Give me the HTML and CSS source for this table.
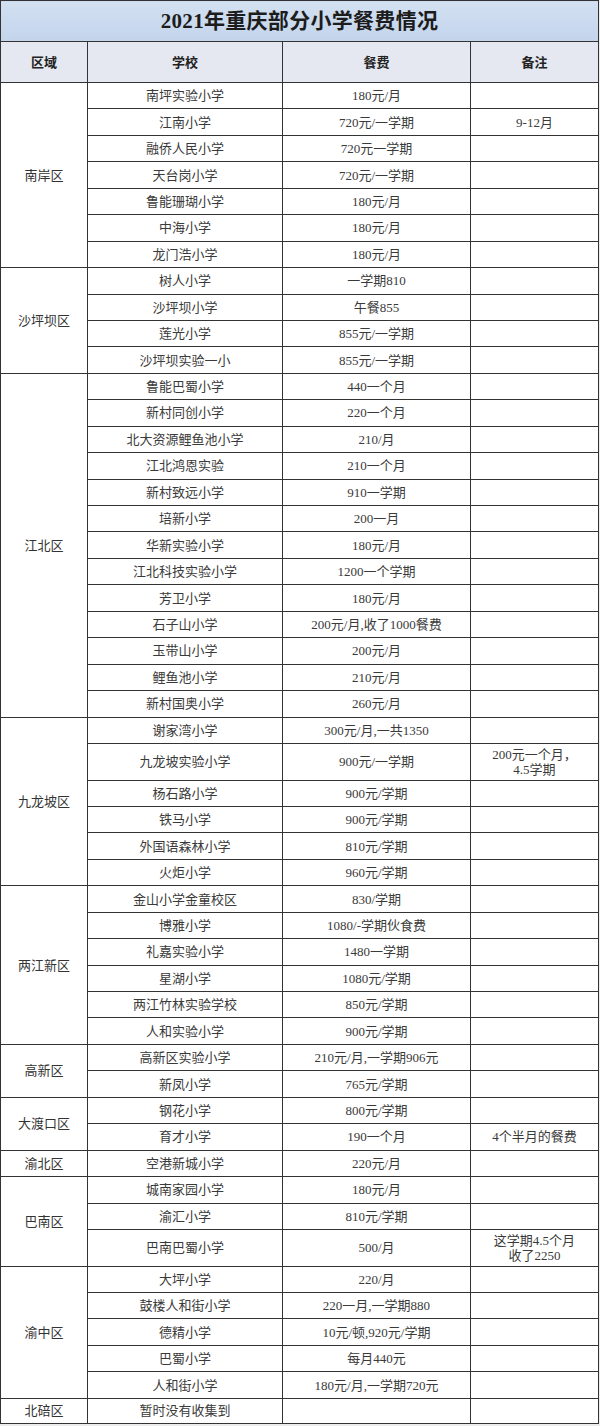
FILE: index.html
```html
<!DOCTYPE html>
<html lang="zh-CN">
<head>
<meta charset="utf-8">
<title>2021年重庆部分小学餐费情况</title>
<link rel="stylesheet" href="styles.css">
</head>
<body>
<table class="fees">
<colgroup>
<col class="c-area"><col class="c-school"><col class="c-fee"><col class="c-note">
</colgroup>
<thead>
<tr class="title-row"><th colspan="4" class="title">2021年重庆部分小学餐费情况</th></tr>
<tr class="head-row"><th>区域</th><th>学校</th><th>餐费</th><th>备注</th></tr>
</thead>
<tbody>
<tr><td rowspan="7" class="area">南岸区</td><td>南坪实验小学</td><td>180元/月</td><td></td></tr>
<tr><td>江南小学</td><td>720元/一学期</td><td>9-12月</td></tr>
<tr><td>融侨人民小学</td><td>720元一学期</td><td></td></tr>
<tr><td>天台岗小学</td><td>720元/一学期</td><td></td></tr>
<tr><td>鲁能珊瑚小学</td><td>180元/月</td><td></td></tr>
<tr><td>中海小学</td><td>180元/月</td><td></td></tr>
<tr><td>龙门浩小学</td><td>180元/月</td><td></td></tr>

<tr><td rowspan="4" class="area">沙坪坝区</td><td>树人小学</td><td>一学期810</td><td></td></tr>
<tr><td>沙坪坝小学</td><td>午餐855</td><td></td></tr>
<tr><td>莲光小学</td><td>855元/一学期</td><td></td></tr>
<tr><td>沙坪坝实验一小</td><td>855元/一学期</td><td></td></tr>

<tr><td rowspan="13" class="area">江北区</td><td>鲁能巴蜀小学</td><td>440一个月</td><td></td></tr>
<tr><td>新村同创小学</td><td>220一个月</td><td></td></tr>
<tr><td>北大资源鲤鱼池小学</td><td>210/月</td><td></td></tr>
<tr><td>江北鸿恩实验</td><td>210一个月</td><td></td></tr>
<tr><td>新村致远小学</td><td>910一学期</td><td></td></tr>
<tr><td>培新小学</td><td>200一月</td><td></td></tr>
<tr><td>华新实验小学</td><td>180元/月</td><td></td></tr>
<tr><td>江北科技实验小学</td><td>1200一个学期</td><td></td></tr>
<tr><td>芳卫小学</td><td>180元/月</td><td></td></tr>
<tr><td>石子山小学</td><td>200元/月,收了1000餐费</td><td></td></tr>
<tr><td>玉带山小学</td><td>200元/月</td><td></td></tr>
<tr><td>鲤鱼池小学</td><td>210元/月</td><td></td></tr>
<tr><td>新村国奥小学</td><td>260元/月</td><td></td></tr>

<tr><td rowspan="6" class="area">九龙坡区</td><td>谢家湾小学</td><td>300元/月,一共1350</td><td></td></tr>
<tr class="tall"><td>九龙坡实验小学</td><td>900元/一学期</td><td>200元一个月，<br>4.5学期</td></tr>
<tr><td>杨石路小学</td><td>900元/学期</td><td></td></tr>
<tr><td>铁马小学</td><td>900元/学期</td><td></td></tr>
<tr><td>外国语森林小学</td><td>810元/学期</td><td></td></tr>
<tr><td>火炬小学</td><td>960元/学期</td><td></td></tr>

<tr><td rowspan="6" class="area">两江新区</td><td>金山小学金童校区</td><td>830/学期</td><td></td></tr>
<tr><td>博雅小学</td><td>1080/-学期伙食费</td><td></td></tr>
<tr><td>礼嘉实验小学</td><td>1480一学期</td><td></td></tr>
<tr><td>星湖小学</td><td>1080元/学期</td><td></td></tr>
<tr><td>两江竹林实验学校</td><td>850元/学期</td><td></td></tr>
<tr><td>人和实验小学</td><td>900元/学期</td><td></td></tr>

<tr><td rowspan="2" class="area">高新区</td><td>高新区实验小学</td><td>210元/月,一学期906元</td><td></td></tr>
<tr><td>新凤小学</td><td>765元/学期</td><td></td></tr>

<tr><td rowspan="2" class="area">大渡口区</td><td>钢花小学</td><td>800元/学期</td><td></td></tr>
<tr><td>育才小学</td><td>190一个月</td><td>4个半月的餐费</td></tr>

<tr><td class="area">渝北区</td><td>空港新城小学</td><td>220元/月</td><td></td></tr>

<tr><td rowspan="3" class="area">巴南区</td><td>城南家园小学</td><td>180元/月</td><td></td></tr>
<tr><td>渝汇小学</td><td>810元/学期</td><td></td></tr>
<tr class="tall"><td>巴南巴蜀小学</td><td>500/月</td><td>这学期4.5个月<br>收了2250</td></tr>

<tr><td rowspan="5" class="area">渝中区</td><td>大坪小学</td><td>220/月</td><td></td></tr>
<tr><td>鼓楼人和街小学</td><td>220一月,一学期880</td><td></td></tr>
<tr><td>德精小学</td><td>10元/顿,920元/学期</td><td></td></tr>
<tr><td>巴蜀小学</td><td>每月440元</td><td></td></tr>
<tr><td>人和街小学</td><td>180元/月,一学期720元</td><td></td></tr>

<tr class="last"><td class="area">北碚区</td><td>暂时没有收集到</td><td></td><td></td></tr>
</tbody>
</table>
</body>
</html>
```

FILE: styles.css
```css
html, body {
  margin: 0;
  padding: 0;
  background: #ececec;
}

body {
  width: 600px;
  height: 1426px;
  overflow: hidden;
}

.fees {
  width: 598px;
  border-collapse: collapse;
  table-layout: fixed;
  font-family: "Liberation Serif", "Noto Sans CJK SC", serif;
  font-size: 13px;
  color: #3a3a3a;
  background: #ffffff;
}

.c-area { width: 87px; }
.c-school { width: 195px; }
.c-fee { width: 188px; }
.c-note { width: 128px; }

.fees th,
.fees td {
  border: 1px solid #333333;
  padding: 0;
  text-align: center;
  vertical-align: middle;
  line-height: 15px;
}

.title-row { height: 41px; }

.title {
  background: linear-gradient(#d3e0f1, #c3d4eb);
  font-family: "Liberation Serif", "Noto Sans CJK SC", serif;
  font-size: 21px;
  font-weight: 700;
  color: #1c1c1c;
  letter-spacing: 0.3px;
}

.head-row { height: 41px; }

.head-row th {
  background: #e5e8f0;
  font-weight: 700;
  color: #222222;
  font-size: 13px;
}

.fees tbody tr { height: 26.45px; }
.fees tbody tr.tall { height: 36.6px; }
.fees tbody tr.last { height: 25px; }

.area {
  color: #333333;
}
```
